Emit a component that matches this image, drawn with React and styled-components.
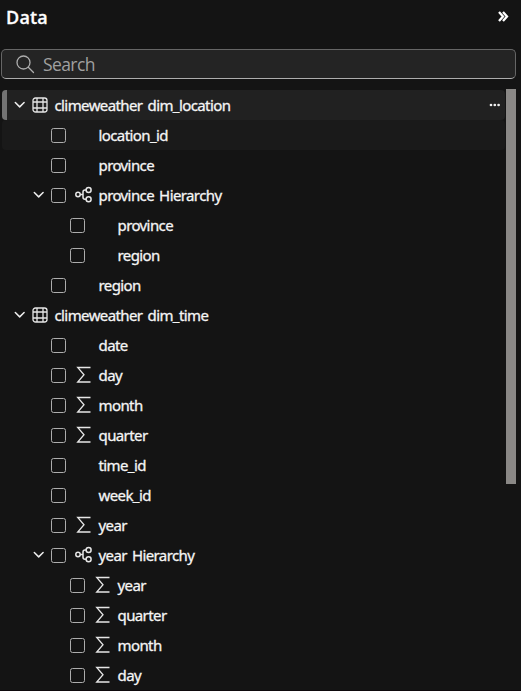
import React from "react";
import styled, { createGlobalStyle } from "styled-components";

const GlobalStyle = createGlobalStyle`
  * { box-sizing: border-box; }
  body { margin: 0; background: #141414; overflow: hidden; }
`;

const Panel = styled.section`
  width: 521px;
  height: 691px;
  display: flex;
  flex-direction: column;
  overflow: hidden;
  background: #141414;
  border-bottom: 1px solid #0d090c;
  color: #f5f5f5;
  font-family: "Noto Sans", "Open Sans", sans-serif;
`;

const Header = styled.header`
  flex: none;
  height: 49px;
  padding: 5px 12px 0 6px;
  display: flex;
  justify-content: space-between;
  align-items: flex-start;
`;

const Title = styled.h2`
  margin: 0;
  font: 600 18px/25px "Open Sans", "Noto Sans", sans-serif;
  letter-spacing: 0.2px;
  color: #fff;
  -webkit-text-stroke: 0.3px currentColor;
`;

const CollapseButton = styled.button`
  margin: 6px 0 0;
  padding: 0;
  border: 0;
  background: none;
  color: #fff;
  display: flex;
`;

const SearchBox = styled.label`
  flex: none;
  width: 515px;
  height: 30px;
  margin-left: 1px;
  padding-left: 14px;
  display: flex;
  align-items: center;
  gap: 8px;
  border: 1px solid #666;
  border-bottom-color: #adadad;
  border-radius: 5px;
  background: #242424;
  color: #adadad;
`;

const SearchInput = styled.input`
  flex: 1;
  min-width: 0;
  padding: 0;
  border: 0;
  outline: 0;
  background: none;
  font: 17.5px/24px "Open Sans", "Noto Sans", sans-serif;
  letter-spacing: -0.6px;
  color: #fff;
  &::placeholder { color: #a0a0a0; opacity: 1; }
`;

const Body = styled.div`
  flex: 1;
  min-height: 0;
  margin-top: 10px;
  display: flex;
`;

const Tree = styled.div`
  width: 506px;
  padding: 1px 1px 0 2px;
`;

const Scrollbar = styled.div`
  width: 10px;
  height: 395px;
  background: #8a8886;
`;

const backgrounds = { selected: "#212121", hover: "#1a1a1a" };

const Row = styled.div`
  height: 30px;
  padding-left: ${(p) => (p.$state === "selected" ? 4 : 9) + p.$level * 19}px;
  padding-right: 4px;
  display: flex;
  align-items: center;
  border-left: ${(p) => (p.$state === "selected" ? "5px solid #737373" : "0")};
  border-radius: 4px;
  background: ${(p) => backgrounds[p.$state] || "transparent"};
`;

const ToggleSlot = styled.span`
  width: 21px;
  display: flex;
  padding-left: 3px;
`;

const Checkbox = styled.span`
  width: 15px;
  height: 15px;
  margin-right: 9px;
  border: 1px solid #adadad;
  border-radius: 2.5px;
`;

const IconSlot = styled.span`
  width: ${(p) => (p.$root ? 22.5 : 23.5)}px;
  display: flex;
`;

const Label = styled.span`
  font-size: 15px;
  line-height: 20px;
  letter-spacing: -0.6px;
  word-spacing: 1.8px;
  white-space: nowrap;
  -webkit-text-stroke: 0.3px currentColor;
`;

const More = styled.span`
  margin-left: auto;
  display: flex;
`;

const Chevron = () => (
  <svg width="12" height="12" viewBox="0 0 12 12" fill="none" stroke="#eee" strokeWidth="1.5" strokeLinecap="round" strokeLinejoin="round">
    <path d="M1.300 3.500 5.700 7.900l4.400-4.400" />
  </svg>
);

const TableIcon = () => (
  <svg width="17" height="17" viewBox="0 0 17 17" fill="none" stroke="#e6e6e6" strokeWidth="1.3">
    <rect x="1" y="1" width="14" height="14" rx="2.500" />
    <path d="M5 1v14M11 1v14M1 5h14M1 11h14" />
  </svg>
);

const HierarchyIcon = () => (
  <svg width="18" height="18" viewBox="0 0 18 18" fill="none" stroke="#e6e6e6" strokeWidth="1.5">
    <circle cx="3" cy="8.500" r="2.200" />
    <circle cx="13.600" cy="4" r="2.500" />
    <circle cx="13.600" cy="13.300" r="2.500" />
    <path d="M5.200 8.500H8M11.100 4H10a2 2 0 0 0-2 2v5.300a2 2 0 0 0 2 2h1.100" />
  </svg>
);

const SigmaIcon = () => (
  <svg width="18" height="18" viewBox="0 0 18 18" fill="none" stroke="#e6e6e6" strokeWidth="1.300">
    <path d="M15.500 1.500H2.700L9 8.800 2.700 16H15.500" />
  </svg>
);

const SearchIcon = () => (
  <svg width="19" height="19" viewBox="0 0 19 19" fill="none" stroke="currentColor" strokeWidth="1.300" strokeLinecap="round">
    <circle cx="7.500" cy="7.500" r="6.500" />
    <path d="m12.300 12.300 5.200 5.200" />
  </svg>
);

const icons = { table: TableIcon, hierarchy: HierarchyIcon, sum: SigmaIcon };

const rows = [
  { level: 0, label: "climeweather dim_location", icon: "table", open: true, state: "selected" },
  { level: 1, label: "location_id", state: "hover" },
  { level: 1, label: "province" },
  { level: 1, label: "province Hierarchy", icon: "hierarchy", open: true },
  { level: 2, label: "province" },
  { level: 2, label: "region" },
  { level: 1, label: "region" },
  { level: 0, label: "climeweather dim_time", icon: "table", open: true },
  { level: 1, label: "date" },
  { level: 1, label: "day", icon: "sum" },
  { level: 1, label: "month", icon: "sum" },
  { level: 1, label: "quarter", icon: "sum" },
  { level: 1, label: "time_id" },
  { level: 1, label: "week_id" },
  { level: 1, label: "year", icon: "sum" },
  { level: 1, label: "year Hierarchy", icon: "hierarchy", open: true },
  { level: 2, label: "year", icon: "sum" },
  { level: 2, label: "quarter", icon: "sum" },
  { level: 2, label: "month", icon: "sum" },
  { level: 2, label: "day", icon: "sum" },
];

function TreeRow({ level, label, icon, open, state }) {
  const Icon = icons[icon];
  return (
    <Row $level={level} $state={state}>
      <ToggleSlot>{open && <Chevron />}</ToggleSlot>
      {level > 0 && <Checkbox role="checkbox" aria-checked="false" aria-label={label} />}
      <IconSlot $root={level === 0}>{Icon && <Icon />}</IconSlot>
      <Label>{label}</Label>
      {state === "selected" && (
        <More>
          <svg width="12" height="4" viewBox="0 0 12 4" fill="#f0f0f0">
            <circle cx="2" cy="2" r="1.350" />
            <circle cx="5.800" cy="2" r="1.350" />
            <circle cx="9.600" cy="2" r="1.350" />
          </svg>
        </More>
      )}
    </Row>
  );
}

export default function App() {
  return (
    <>
      <GlobalStyle />
      <Panel>
        <Header>
          <Title>Data</Title>
          <CollapseButton aria-label="Collapse">
            <svg width="11" height="11" viewBox="0 0 11 11" fill="none" stroke="currentColor" strokeWidth="2.300">
              <path d="m1 1 4 4.500-4 4.500M5 1l4 4.500L5 10" />
            </svg>
          </CollapseButton>
        </Header>
        <SearchBox>
          <SearchIcon />
          <SearchInput placeholder="Search" />
        </SearchBox>
        <Body>
          <Tree>
            {rows.map((row, i) => (
              <TreeRow key={i} {...row} />
            ))}
          </Tree>
          <Scrollbar />
        </Body>
      </Panel>
    </>
  );
}
